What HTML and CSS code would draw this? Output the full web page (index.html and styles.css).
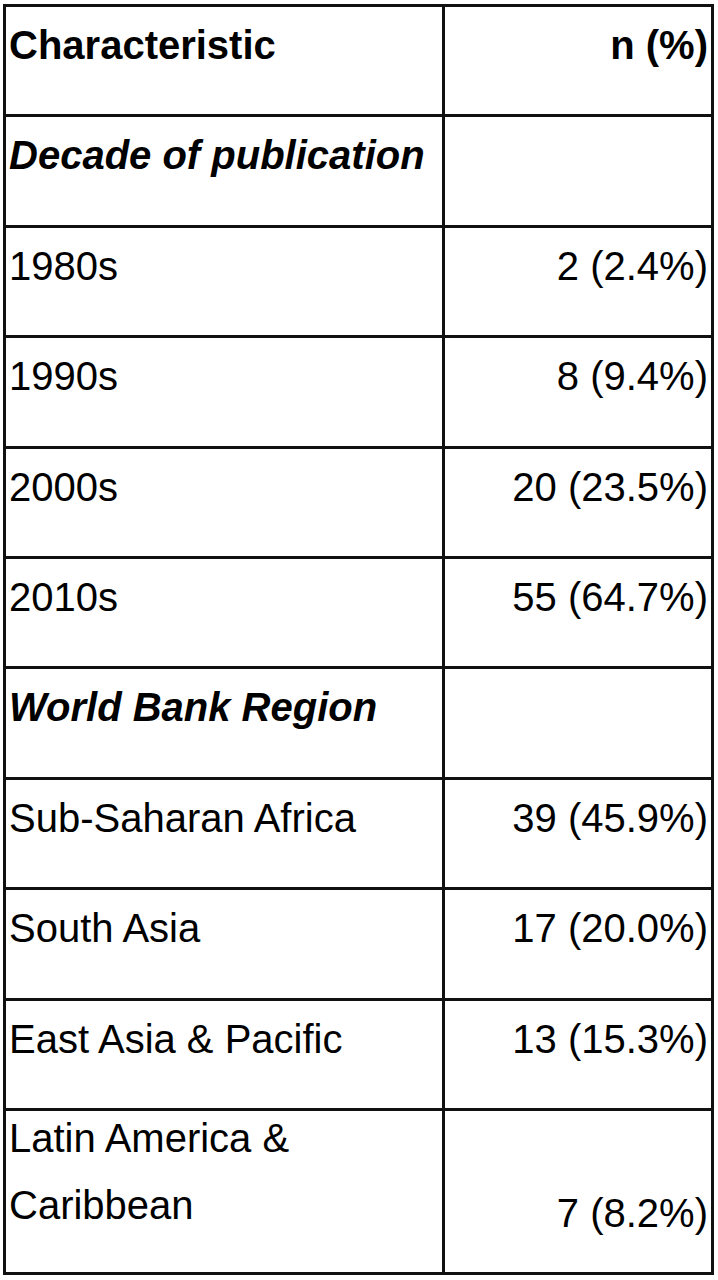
FILE: index.html
```html
<!DOCTYPE html>
<html lang="en">
<head>
<meta charset="utf-8">
<title>Characteristics table</title>
<link rel="stylesheet" href="styles.css">
</head>
<body>
<div class="table">
  <div class="cell head">Characteristic</div>
  <div class="cell head num">n (%)</div>

  <div class="cell section">Decade of publication</div>
  <div class="cell"></div>

  <div class="cell">1980s</div>
  <div class="cell num">2 (2.4%)</div>

  <div class="cell">1990s</div>
  <div class="cell num">8 (9.4%)</div>

  <div class="cell">2000s</div>
  <div class="cell num">20 (23.5%)</div>

  <div class="cell">2010s</div>
  <div class="cell num">55 (64.7%)</div>

  <div class="cell section">World Bank Region</div>
  <div class="cell"></div>

  <div class="cell">Sub-Saharan Africa</div>
  <div class="cell num">39 (45.9%)</div>

  <div class="cell">South Asia</div>
  <div class="cell num">17 (20.0%)</div>

  <div class="cell">East Asia &amp; Pacific</div>
  <div class="cell num">13 (15.3%)</div>

  <div class="cell tall"><div class="wrap">Latin America &amp; Caribbean</div></div>
  <div class="cell num bottom">7 (8.2%)</div>
</div>
</body>
</html>
```

FILE: styles.css
```css
html, body {
  margin: 0;
  padding: 0;
  background: #ffffff;
}

body {
  font-family: "Liberation Sans", Arial, sans-serif;
  font-size: 40px;
  color: #000000;
}

.table {
  display: grid;
  grid-template-columns: 436px 266px;
  grid-template-rows: repeat(10, 107.4px) 161px;
  gap: 3px;
  padding: 3px;
  background: #111111;
  width: max-content;
  margin: 4px 0 0 3px;
}

.cell {
  background: #ffffff;
  padding: 16px 3px 0 3px;
  line-height: normal;
  white-space: nowrap;
}

.cell.num {
  text-align: right;
}

.head {
  font-weight: bold;
}

.section {
  font-weight: bold;
  font-style: italic;
}

.tall {
  padding-top: 0;
  white-space: normal;
}

.tall .wrap {
  line-height: 67px;
  margin-top: -6px;
}

.bottom {
  display: flex;
  align-items: flex-end;
  justify-content: flex-end;
  padding-top: 0;
  padding-bottom: 36px;
}
```
